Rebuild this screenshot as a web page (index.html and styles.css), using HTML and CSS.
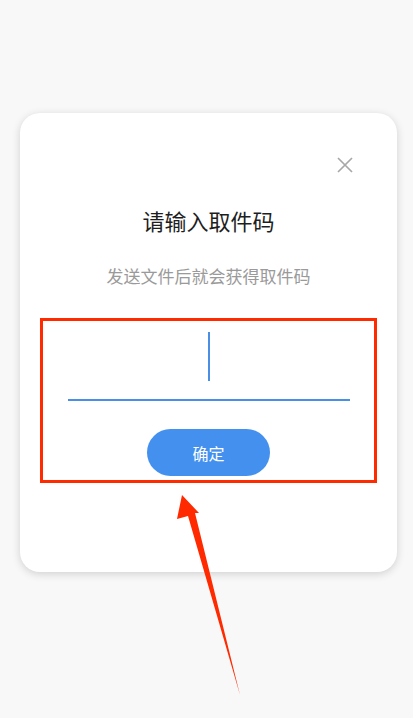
FILE: index.html
```html
<!DOCTYPE html>
<html lang="zh-CN">
<head>
<meta charset="utf-8">
<title>请输入取件码</title>
<link rel="stylesheet" href="styles.css">
</head>
<body>
<div class="dialog">
  <div class="close-row">
    <svg class="close" viewBox="0 0 16 16" width="16" height="16"><path d="M1 1 L15 15 M15 1 L1 15" stroke="#a8a8a8" stroke-width="1.7" fill="none"/></svg>
  </div>
  <h1 class="title">请输入取件码</h1>
  <p class="subtitle">发送文件后就会获得取件码</p>
  <div class="input-area">
    <div class="caret"></div>
    <div class="underline"></div>
    <button class="confirm">确定</button>
  </div>
</div>
<svg class="arrow" viewBox="0 0 413 718" width="413" height="718">
  <polygon points="182,495 199,513 195,513 240,695 188,516 177,519" fill="#ff2a00"/>
</svg>
</body>
</html>
```
FILE: styles.css
```css
html, body {
  margin: 0;
  padding: 0;
}
body {
  background: #f8f8f8;
  width: 413px;
  height: 718px;
  position: relative;
  overflow: hidden;
  font-family: "Noto Sans CJK SC", "Noto Sans", sans-serif;
  padding-top: 113px;
  box-sizing: border-box;
}
.dialog {
  margin-left: 20px;
  width: 377px;
  background: #fff;
  border-radius: 20px;
  box-shadow: 0 2px 8px rgba(0,0,0,0.16);
  padding: 44px 0 89px;
  display: flex;
  flex-direction: column;
  align-items: center;
}
.close-row {
  align-self: stretch;
  display: flex;
  justify-content: flex-end;
  padding-right: 44px;
  height: 16px;
}
.close {
  display: block;
}
.title {
  margin: 32px 0 0;
  font-size: 22px;
  line-height: 30px;
  font-weight: normal;
  color: #1e1e1e;
}
.subtitle {
  margin: 29px 0 0;
  font-size: 17px;
  line-height: 24px;
  color: #9a9a9a;
}
.input-area {
  margin-top: 30px;
  align-self: stretch;
  margin-left: 20px;
  margin-right: 20px;
  border: 3px solid #ff2a00;
  display: flex;
  flex-direction: column;
  align-items: center;
  padding: 11px 0 4px;
}
.caret {
  width: 2px;
  height: 49px;
  background: #4a8fe6;
}
.underline {
  margin-top: 18px;
  width: 282px;
  height: 2px;
  background: #4a8fe6;
}
.confirm {
  margin-top: 28px;
  width: 123px;
  height: 47px;
  border: none;
  border-radius: 24px;
  background: #4390ef;
  color: #fff;
  font-family: inherit;
  font-size: 16px;
  padding: 0;
}
.arrow {
  position: absolute;
  left: 0;
  top: 0;
}
```
